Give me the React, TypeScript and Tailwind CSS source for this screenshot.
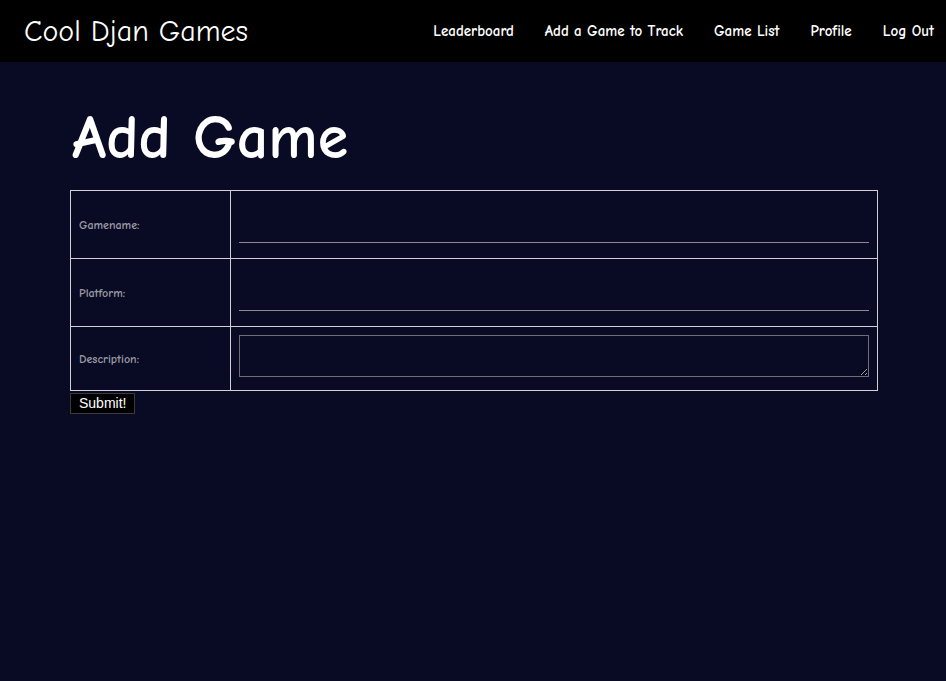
const comic = { fontFamily: '"Comic Sans MS", "Comic Neue", "Noto Sans", sans-serif' };

function Field({ label, children, tall }: { label: string; children: React.ReactNode; tall?: boolean }) {
  return (
    <tr className={tall ? 'h-[64px]' : 'h-[68px]'}>
      <td className="w-[160px] border border-[#d0d0d8] px-2 align-middle text-[12px] font-extrabold text-[#9a9aa4]">
        {label}
      </td>
      <td className={`border border-[#d0d0d8] px-2 ${tall ? 'align-top pt-2' : 'align-middle'}`}>{children}</td>
    </tr>
  );
}

export default function App() {
  return (
    <div className="min-h-[681px] bg-[#090a24]" style={comic}>
      <nav className="flex h-[62px] items-center justify-between bg-black pl-6 pr-3">
        <a className="text-[30px] font-medium text-white">Cool Djan Games</a>
        <ul className="flex items-center gap-[31px] text-[15px] font-bold text-white">
          <li>Leaderboard</li>
          <li>Add a Game to Track</li>
          <li>Game List</li>
          <li>Profile</li>
          <li>Log Out</li>
        </ul>
      </nav>

      <main className="pl-[70px]">
        <h1 className="pt-[36px] pb-[12px] pl-[2px] text-[62px] font-bold leading-[80px] text-white">Add Game</h1>
        <form>
          <table className="w-[808px] border-collapse border border-[#d0d0d8]">
            <tbody>
              <Field label="Gamename:">
                <input
                  type="text"
                  className="mt-[12px] block w-full border-0 border-b border-[#8a8a94] bg-transparent text-white outline-none"
                />
              </Field>
              <Field label="Platform:">
                <input
                  type="text"
                  className="mt-[12px] block w-full border-0 border-b border-[#8a8a94] bg-transparent text-white outline-none"
                />
              </Field>
              <Field label="Description:" tall>
                <textarea className="block h-[42px] w-full border border-[#6e6e78] bg-transparent text-white outline-none" />
              </Field>
            </tbody>
          </table>
          <button
            type="submit"
            className="border border-[#3a3a3a] bg-black px-[8px] text-[14px] leading-[19px] text-white"
            style={{ fontFamily: '"Liberation Sans", Arial, sans-serif' }}
          >
            Submit!
          </button>
        </form>
      </main>
    </div>
  );
}
